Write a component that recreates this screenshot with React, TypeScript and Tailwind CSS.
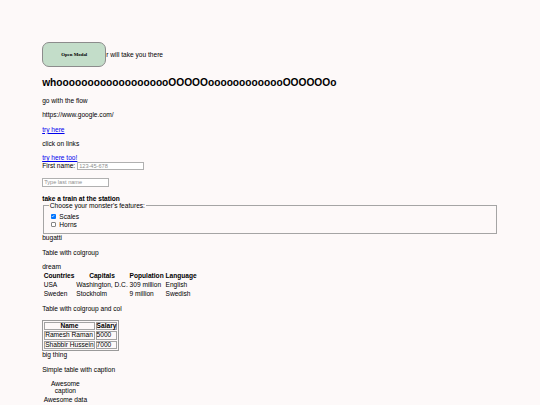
const heading =
  "wh" + "o".repeat(18) + "OOOOO" + "o".repeat(12) + "OOOOOO" + "o";

function Check({ checked, label }: { checked?: boolean; label: string }) {
  return (
    <label className="flex h-[8.4px] items-center">
      {checked ? (
        <span className="ml-[1.9px] mr-[3.4px] flex h-[5px] w-[5px] items-center justify-center rounded-[1px] bg-[#0075ff]">
          <svg viewBox="0 0 10 10" className="h-[4px] w-[4px]">
            <path d="M2 5.2 L4.1 7.3 L8 2.8" fill="none" stroke="white" strokeWidth="1.8" />
          </svg>
        </span>
      ) : (
        <span className="ml-[1.9px] mr-[3.4px] h-[5px] w-[5px] rounded-[1px] border border-[#858585] bg-white" />
      )}
      <span>{label}</span>
    </label>
  );
}

export default function App() {
  const cell = "px-[0.45px] py-[0.25px]";
  const boxed = "border border-[#a3a3a3] px-0 py-0 leading-[6.6px]";

  return (
    <div className="min-h-screen bg-[#fdf9f9] font-['Liberation_Sans',Arial,sans-serif] text-[6.6px] leading-[7.6px] text-black">
      <div className="ml-[42.2px] w-[455.6px] pt-[42.3px]">
        <div className="flex items-center">
          <button
            type="button"
            className="h-[25px] w-[64px] shrink-0 rounded-[7px] border border-[#8c8c8c] bg-[#c3ddc9] font-['Liberation_Serif',serif] text-[4.85px] font-bold"
          >
            Open Modal
          </button>
          <span>r will take you there</span>
        </div>

        <h2 className="mt-[9.6px] text-[10.2px] leading-[11.5px] font-bold">{heading}</h2>

        <p className="mt-[9px]">go with the flow</p>
        <p className="mt-[6.4px]">https://www.google.com/</p>
        <p className="mt-[6.7px]">
          <a href="#" className="text-[#0000ee] underline">try here</a>
        </p>
        <p className="mt-[6.7px]">click on links</p>

        <div className="mt-[6.8px]">
          <a href="#" className="text-[#0000ee] underline">try here too!</a>
        </div>
        <div className="flex items-center gap-[2px]">
          <label htmlFor="fname">First name:</label>
          <input
            id="fname"
            type="text"
            placeholder="123-45-678"
            className="h-[8.4px] w-[66.6px] border border-[#b0b0b0] bg-white px-[1px] text-[5.6px] placeholder:text-[#8d8d8d]"
          />
        </div>
        <input
          type="text"
          placeholder="Type last name"
          className="mt-[7.8px] block h-[8.6px] w-[66.6px] border border-[#b0b0b0] bg-white px-[1px] text-[5.6px] placeholder:text-[#8d8d8d]"
        />

        <p className="mt-[7.8px] font-bold">take a train at the station</p>
        <fieldset className="mx-[0.84px] border border-[#a5a5a5] px-[5px] pt-[2.6px] pb-[4.2px]">
          <legend className="px-[0.84px]">Choose your monster's features:</legend>
          <Check checked label="Scales" />
          <Check label="Horns" />
        </fieldset>
        <div>bugatti</div>

        <p className="mt-[6.7px]">Table with colgroup</p>
        <p className="mt-[6.7px]">dream</p>
        <table className="border-separate border-spacing-[1px]">
          <thead>
            <tr>
              <th className={`${cell} text-center font-bold`}>Countries</th>
              <th className={`${cell} text-center font-bold`}>Capitals</th>
              <th className={`${cell} text-center font-bold`}>Population</th>
              <th className={`${cell} text-center font-bold`}>Language</th>
            </tr>
          </thead>
          <tbody>
            <tr>
              <td className={cell}>USA</td>
              <td className={cell}>Washington, D.C.</td>
              <td className={cell}>309 million</td>
              <td className={cell}>English</td>
            </tr>
            <tr>
              <td className={cell}>Sweden</td>
              <td className={cell}>Stockholm</td>
              <td className={cell}>9 million</td>
              <td className={cell}>Swedish</td>
            </tr>
          </tbody>
        </table>

        <p className="mt-[6.1px]">Table with colgroup and col</p>
        <table className="mt-[7.3px] border-separate border-spacing-[1px] border border-[#9a9a9a]">
          <thead>
            <tr>
              <th className={`${boxed} text-center font-bold`}>Name</th>
              <th className={`${boxed} text-center font-bold`}>Salary</th>
            </tr>
          </thead>
          <tbody>
            <tr>
              <td className={boxed}>Ramesh Raman</td>
              <td className={boxed}>5000</td>
            </tr>
            <tr>
              <td className={boxed}>Shabbir Hussein</td>
              <td className={boxed}>7000</td>
            </tr>
          </tbody>
        </table>
        <div>big thing</div>

        <p className="mt-[6.6px]">Simple table with caption</p>
        <table className="mt-[6.6px] border-separate border-spacing-[1px]">
          <caption className="text-center">Awesome caption</caption>
          <tbody>
            <tr>
              <td className={cell}>Awesome data</td>
            </tr>
          </tbody>
        </table>
      </div>
    </div>
  );
}
